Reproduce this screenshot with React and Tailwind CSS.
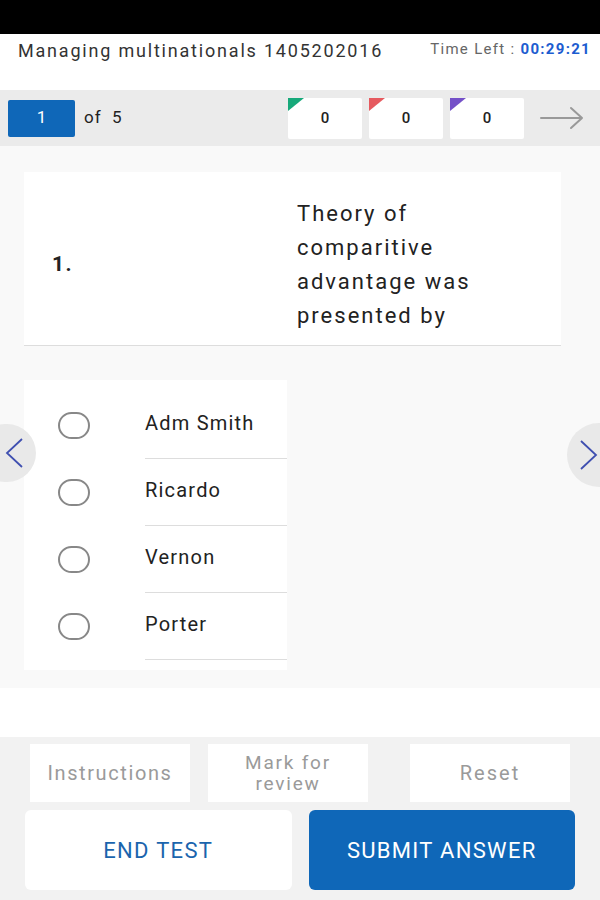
import React from "react";

const counters = [
  { value: 0, color: "border-t-[#17a97a]" },
  { value: 0, color: "border-t-[#e65a5f]" },
  { value: 0, color: "border-t-[#7450c8]" },
];

const options = ["Adm Smith", "Ricardo", "Vernon", "Porter"];

const App = () => {
  return (
    <div className="w-[600px] h-[900px] flex flex-col bg-white overflow-hidden font-['Roboto','Liberation_Sans',sans-serif]">
      {/* Status bar */}
      <div className="h-[34px] bg-black shrink-0"></div>

      {/* Header */}
      <div className="h-[56px] shrink-0 flex items-start justify-between pl-[18px] pr-[9px] pt-[3px]">
        <span className="text-[18px] tracking-[1.8px] text-[#333] whitespace-nowrap">
          Managing multinationals 1405202016
        </span>
        <span className="text-[15px] tracking-[1.3px] text-[#666] pt-[1px] whitespace-nowrap">
          Time Left :{" "}
          <span className="text-[#1c5cd0] font-bold">00:29:21</span>
        </span>
      </div>

      {/* Navigation bar */}
      <div className="h-[56px] shrink-0 bg-[#ebebeb] flex items-center pl-[8px] pr-[16px]">
        <div className="w-[67px] h-[37px] bg-[#0f67b8] rounded-[2px] flex items-center justify-center text-white text-[17px]">
          1
        </div>
        <span className="ml-[9px] text-[17px] tracking-[1px] text-[#222]">of&nbsp; 5</span>
        <div className="ml-auto flex gap-[7px]">
          {counters.map((c, i) => (
            <div
              key={i}
              className="relative w-[74px] h-[41px] bg-white rounded-[2px] flex items-center justify-center text-[15px] font-medium text-[#222]"
            >
              <span
                className={`absolute top-0 left-0 w-0 h-0 border-t-[13px] border-r-[16px] border-r-transparent ${c.color}`}
              ></span>
              {c.value}
            </div>
          ))}
        </div>
        <svg className="ml-[16px]" width="44" height="24" viewBox="0 0 44 24" fill="none">
          <path d="M1 12H42M31 2L42 12L31 22" stroke="#999" strokeWidth="2" strokeLinecap="round" strokeLinejoin="round" />
        </svg>
      </div>

      {/* Content */}
      <div className="relative h-[542px] shrink-0 bg-[#f9f9f9] pt-[26px] px-[24px]">
        <div className="w-[537px] h-[174px] bg-white border-b border-[#ddd] flex items-center pt-[12px]">
          <span className="w-[273px] pl-[28px] text-[21px] tracking-[1.5px] font-bold text-[#222]">1.</span>
          <p className="w-[220px] text-[22px] leading-[34px] tracking-[2px] text-[#222]">
            Theory of comparitive advantage was presented by
          </p>
        </div>

        <div className="mt-[34px] w-[263px] bg-white pt-[12px] pb-[10px]">
          {options.map((opt) => (
            <div key={opt} className="flex h-[67px]">
              <div className="w-[121px] flex items-center pl-[34px]">
                <span className="w-[32px] h-[27px] rounded-full border-[2.5px] border-[#888]"></span>
              </div>
              <div className="flex-1 border-b border-[#ddd] flex items-center pb-[4px] text-[20px] tracking-[1.2px] text-[#222]">
                {opt}
              </div>
            </div>
          ))}
        </div>

        {/* Side arrows */}
        <div className="absolute left-[-24px] top-[278px] w-[60px] h-[58px] rounded-full bg-[#e9e9e9] flex items-center justify-end pr-[12px]">
          <svg width="19" height="30" viewBox="0 0 19 30" fill="none">
            <path d="M17 1L2 15L17 29" stroke="#3f4fb0" strokeWidth="1.8" />
          </svg>
        </div>
        <div className="absolute right-[-33px] top-[277px] w-[66px] h-[64px] rounded-full bg-[#e9e9e9] flex items-center pl-[12px]">
          <svg width="19" height="30" viewBox="0 0 19 30" fill="none">
            <path d="M2 1L17 15L2 29" stroke="#3f4fb0" strokeWidth="1.8" />
          </svg>
        </div>
      </div>

      <div className="h-[49px] shrink-0 bg-white"></div>

      {/* Footer */}
      <div className="flex-1 bg-[#f2f2f2] pt-[7px] px-[25px]">
        <div className="flex items-stretch h-[58px]">
          <div className="ml-[5px] w-[160px] bg-white flex items-center justify-center text-[20px] tracking-[1.6px] text-[#9a9a9a]">
            Instructions
          </div>
          <div className="ml-[18px] w-[160px] bg-white flex items-center justify-center text-center text-[19px] leading-[21px] tracking-[1.8px] text-[#9a9a9a]">
            Mark for
            <br />
            review
          </div>
          <div className="ml-[42px] w-[160px] bg-white flex items-center justify-center text-[20px] tracking-[2px] text-[#9a9a9a]">
            Reset
          </div>
        </div>
        <div className="mt-[8px] flex gap-[17px] h-[80px]">
          <button className="w-[267px] bg-white rounded-[6px] text-[22px] tracking-[1.3px] text-[#1a64ad]">
            END TEST
          </button>
          <button className="w-[267px] bg-[#0f67b8] rounded-[6px] text-[22px] tracking-[1.3px] text-white">
            SUBMIT ANSWER
          </button>
        </div>
      </div>
    </div>
  );
};

export default App;
